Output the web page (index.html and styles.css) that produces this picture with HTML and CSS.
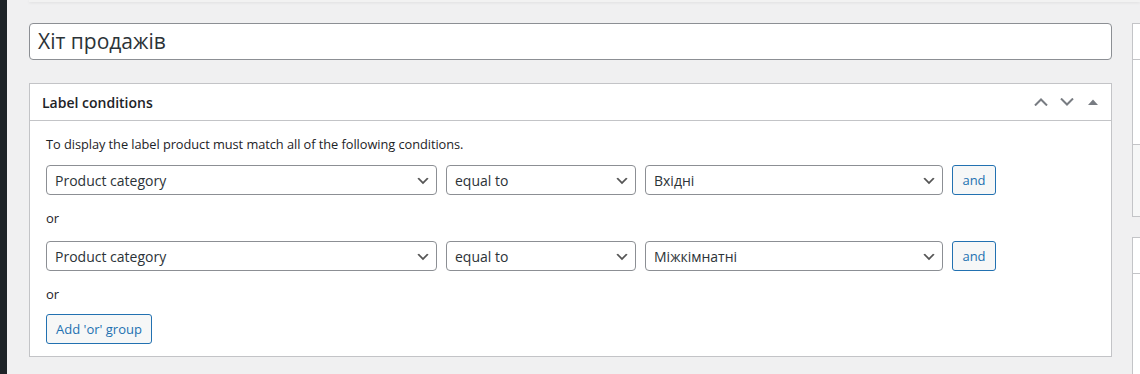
FILE: index.html
```html
<!DOCTYPE html>
<html lang="uk">
<head>
<meta charset="utf-8">
<title>Label</title>
<link rel="stylesheet" href="styles.css">
</head>
<body>
<div class="admin">
  <div class="adminmenu"></div>
  <div class="content">
    <div class="topbar"></div>
    <div class="columns">
      <div class="main">
        <div class="title-input">Хіт продажів</div>
        <div class="postbox">
          <div class="postbox-header">
            <h2>Label conditions</h2>
            <div class="handles">
              <span class="handle">
                <svg width="14" height="8" viewBox="0 0 14 8"><path d="M1 7.5 L7 1.5 L13 7.5" fill="none" stroke="#787c82" stroke-width="2"/></svg>
              </span>
              <span class="handle">
                <svg width="14" height="8" viewBox="0 0 14 8"><path d="M1 0.5 L7 6.5 L13 0.5" fill="none" stroke="#787c82" stroke-width="2"/></svg>
              </span>
              <span class="handle toggle">
                <svg width="10" height="6" viewBox="0 0 10 6"><path d="M0 6 L5 0.5 L10 6 Z" fill="#787c82"/></svg>
              </span>
            </div>
          </div>
          <div class="inside">
            <p class="intro">To display the label product must match all of the following conditions.</p>
            <div class="cond-row">
              <div class="select w1"><span>Product category</span><svg class="arrow" width="16" height="16" viewBox="0 0 20 20"><path d="M5 6l5 5 5-5 2 1-7 7-7-7 2-1z" fill="#555"/></svg></div>
              <div class="select w2"><span>equal to</span><svg class="arrow" width="16" height="16" viewBox="0 0 20 20"><path d="M5 6l5 5 5-5 2 1-7 7-7-7 2-1z" fill="#555"/></svg></div>
              <div class="select w3"><span>Вхідні</span><svg class="arrow" width="16" height="16" viewBox="0 0 20 20"><path d="M5 6l5 5 5-5 2 1-7 7-7-7 2-1z" fill="#555"/></svg></div>
              <button class="btn and">and</button>
            </div>
            <div class="or">or</div>
            <div class="cond-row">
              <div class="select w1"><span>Product category</span><svg class="arrow" width="16" height="16" viewBox="0 0 20 20"><path d="M5 6l5 5 5-5 2 1-7 7-7-7 2-1z" fill="#555"/></svg></div>
              <div class="select w2"><span>equal to</span><svg class="arrow" width="16" height="16" viewBox="0 0 20 20"><path d="M5 6l5 5 5-5 2 1-7 7-7-7 2-1z" fill="#555"/></svg></div>
              <div class="select w3"><span>Міжкімнатні</span><svg class="arrow" width="16" height="16" viewBox="0 0 20 20"><path d="M5 6l5 5 5-5 2 1-7 7-7-7 2-1z" fill="#555"/></svg></div>
              <button class="btn and">and</button>
            </div>
            <div class="or last">or</div>
            <button class="btn addor">Add 'or' group</button>
          </div>
        </div>
      </div>
      <div class="side">
        <div class="sidebox">
          <div class="sb-head"></div>
          <div class="sb-body"></div>
          <div class="sb-foot"></div>
        </div>
        <div class="sidebox two">
          <div class="sb-head"></div>
          <div class="sb-body"></div>
        </div>
      </div>
    </div>
  </div>
</div>
</body>
</html>
```
FILE: styles.css
```css
* { box-sizing: border-box; }
html, body { margin: 0; padding: 0; height: 100%; }
body {
  background: #f0f0f1;
  font-family: "Open Sans", "Noto Sans", sans-serif;
  font-size: 13px;
  color: #1d2327;
  overflow: hidden;
}
.admin { display: flex; height: 374px; overflow: hidden; }
.adminmenu { width: 7px; flex: none; background: #1d2327; }
.content { flex: 1; padding-left: 22px; min-width: 0; }
.topbar {
  height: 2px;
  background: #f2f2f2;
  box-shadow: 0 1px 3px rgba(0,0,0,0.08);
}
.columns { display: flex; gap: 20px; padding-top: 21px; }
.main { width: 1083px; flex: none; }
.title-input {
  height: 37px;
  border: 1px solid #8c8f94;
  border-radius: 4px;
  background: #fff;
  font-size: 21px;
  line-height: 35px;
  padding-left: 8px;
  color: #2c3338;
}
.postbox {
  margin-top: 23px;
  background: #fff;
  border: 1px solid #c3c4c7;
}
.postbox-header {
  height: 37px;
  border-bottom: 1px solid #c3c4c7;
  display: flex;
  align-items: center;
  justify-content: space-between;
}
.postbox-header h2 {
  margin: 0;
  padding-left: 12px;
  font-size: 14px;
  font-weight: 600;
  color: #1d2327;
}
.handles { display: flex; align-items: center; padding-right: 5px; }
.handle { width: 26px; height: 36px; display: flex; align-items: center; justify-content: center; }
.inside {
  padding: 14px 16px 12px;
  display: flex;
  flex-direction: column;
  align-items: flex-start;
}
.intro { margin: 0; line-height: 19px; font-size: 12.8px; font-weight: 500; letter-spacing: -0.05px; }
.cond-row { display: flex; margin-top: 11px; }
.select {
  height: 30px;
  border: 1px solid #8c8f94;
  border-radius: 4px;
  background: #fff;
  display: flex;
  align-items: center;
  justify-content: space-between;
  padding: 0 5px 0 8px;
  font-size: 14px;
  color: #2c3338;
  margin-right: 9px;
}
.select .arrow { margin-top: 1px; }
.w1 { width: 391px; }
.w2 { width: 190px; }
.w3 { width: 298px; }
.btn {
  font-family: inherit;
  height: 30px;
  border: 1px solid #2271b1;
  border-radius: 3px;
  background: #f6f7f7;
  color: #2271b1;
  font-size: 13px;
  padding: 0 10px;
}
.btn.and { width: 44px; padding: 0; }
.btn.addor { width: 106px; padding: 0; margin-top: 8px; }
.or { line-height: 19px; margin: 14px 0 2px; color: #1d2327; }
.side { flex: 1; }
.sidebox {
  background: #fff;
  border: 1px solid #c3c4c7;
  border-right: none;
}
.sb-head { height: 36px; border-bottom: 1px solid #c3c4c7; }
.sb-body { height: 84px; }
.sb-foot { height: 72px; background: #f6f7f7; border-top: 1px solid #c3c4c7; }
.sidebox.two { margin-top: 20px; border-bottom: none; }
.sidebox.two .sb-body { height: 100px; }
```
